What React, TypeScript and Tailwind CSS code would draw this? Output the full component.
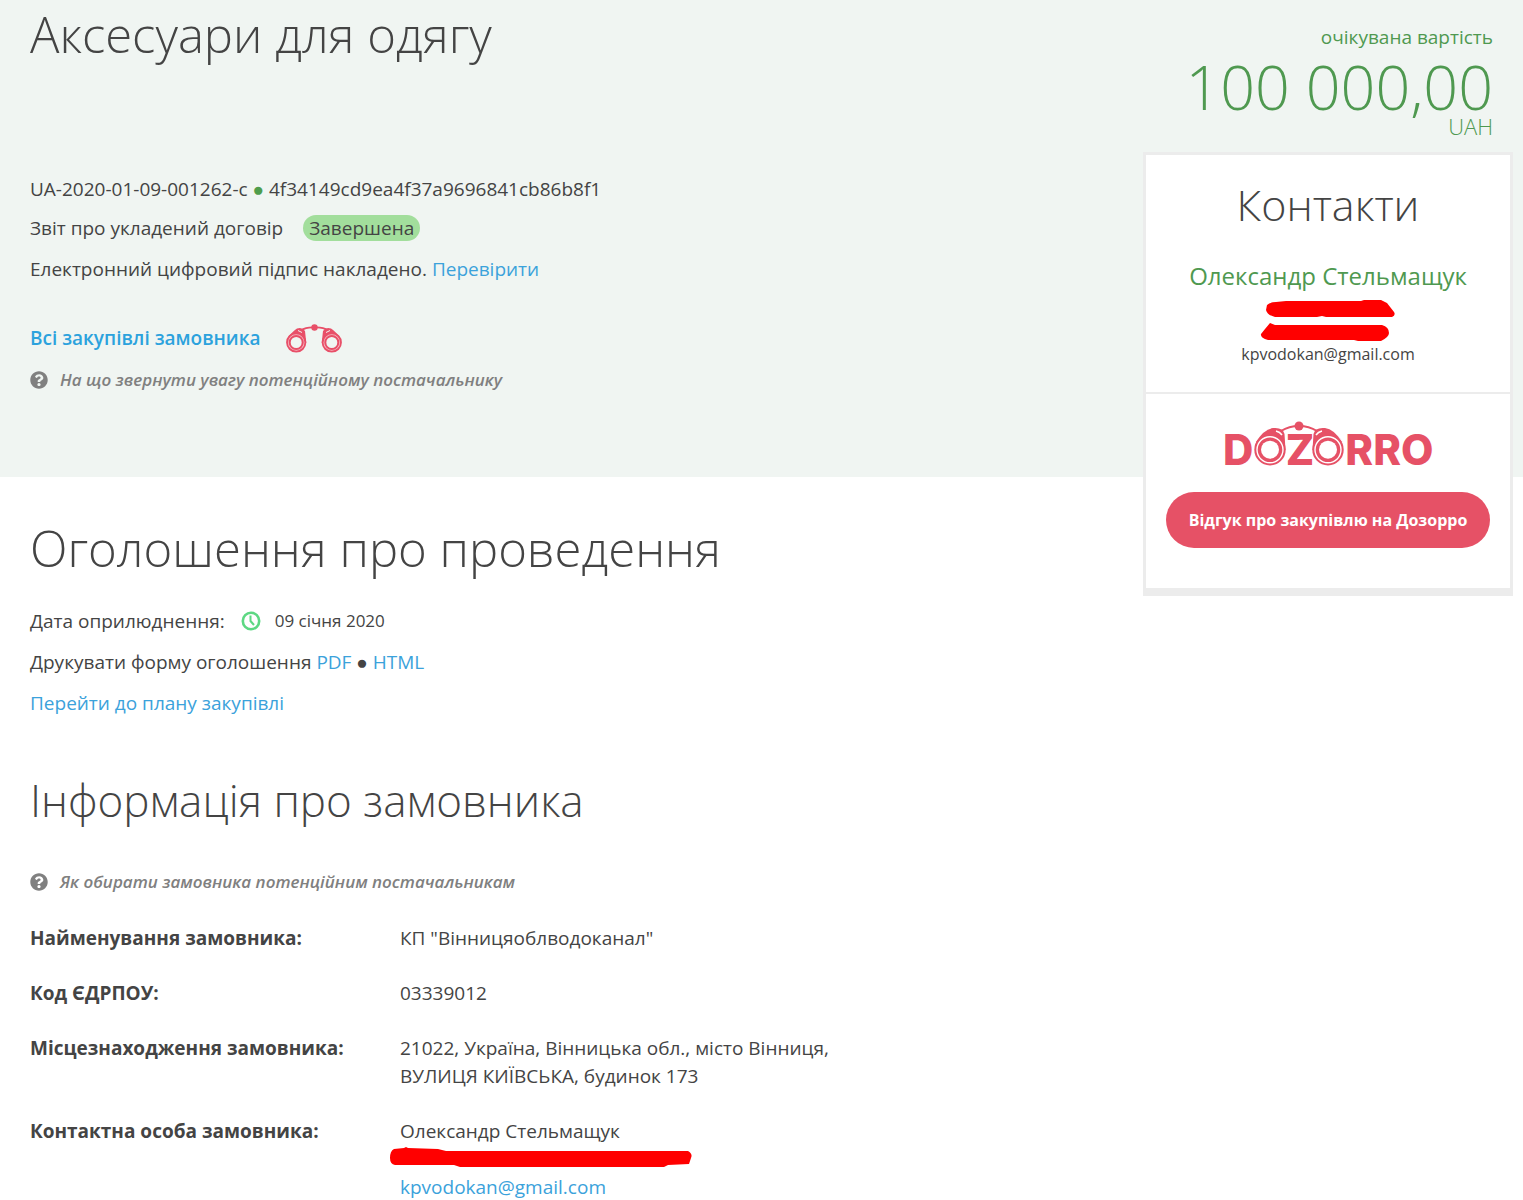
import React from 'react';
import { FaQuestionCircle } from 'react-icons/fa';

interface CustomerRow {
  label: string;
  value: React.ReactNode;
}

const Binoculars: React.FC = () => (
  <svg width="58" height="34" viewBox="0 0 58 34" fill="none" stroke="#e84f68" aria-hidden="true">
    <g transform="translate(0 2)">
      <path d="M16 7.500 Q21 4 29.500 4.500 Q38 4 43 7.500" strokeWidth="1.800" />
      <circle cx="29.500" cy="4.500" r="3.200" fill="#e84f68" stroke="none" />
      <path d="M3 14 Q8 8 12 5.500 Q17 3.500 20 8 L21.300 20 L11 12 Z" fill="#e84f68" stroke="none" />
      <path d="M55 14 Q50 8 46 5.500 Q41 3.500 38 8 L36.700 20 L47 12 Z" fill="#e84f68" stroke="none" />
      <path d="M13 7.500 L17 9.500 M45 7.500 L41 9.500" stroke="#f0f5f2" strokeWidth="1" />
      <circle cx="11.200" cy="19.500" r="9.200" fill="#f6b9c2" strokeWidth="1.800" />
      <circle cx="11.200" cy="19.500" r="6.500" fill="#f0f5f2" strokeWidth="2" />
      <circle cx="46.800" cy="19.500" r="9.200" fill="#f6b9c2" strokeWidth="1.800" />
      <circle cx="46.800" cy="19.500" r="6.500" fill="#f0f5f2" strokeWidth="2" />
    </g>
  </svg>
);

const DozorroLogo: React.FC = () => (
  <svg width="212" height="56" viewBox="0 0 212 56" fill="#e65166">
    <text x="1" y="44" fontSize="42" fontWeight="800" className="font-['Inter',sans-serif]">
      DOZORRO
    </text>
    <path d="M59 10 Q67 5 77 5 Q87 5 95 10" fill="none" stroke="#e65166" strokeWidth="2" />
    <circle cx="77" cy="5" r="4.500" />
    <circle cx="48" cy="28.700" r="16.800" fill="#fff" />
    <circle cx="106" cy="28.700" r="16.800" fill="#fff" />
    <path d="M34 21 Q42 8 51 7 Q61 6 62.500 13 L63.500 29 L48 29 Z" />
    <path d="M120 21 Q112 8 103 7 Q93 6 91.500 13 L90.500 29 L106 29 Z" />
    <path d="M54 10 Q58 11 60 14 M100 10 Q96 11 94 14" fill="none" stroke="#fff" strokeWidth="1.500" />
    <circle cx="48" cy="28.700" r="15.700" />
    <circle cx="48" cy="28.700" r="13" fill="none" stroke="#fff" strokeWidth="1.400" />
    <circle cx="48" cy="28.700" r="9" fill="#fff" />
    <circle cx="106" cy="28.700" r="15.700" />
    <circle cx="106" cy="28.700" r="13" fill="none" stroke="#fff" strokeWidth="1.400" />
    <circle cx="106" cy="28.700" r="9" fill="#fff" />
  </svg>
);

const HelpLink: React.FC<{ children: React.ReactNode }> = ({ children }) => (
  <a href="#" className="flex items-center gap-3 font-semibold italic text-[17px] leading-7 text-[#808080]">
    <FaQuestionCircle className="w-[18px] h-[18px]" />
    {children}
  </a>
);

const customerRows: CustomerRow[] = [
  { label: 'Найменування замовника:', value: 'КП "Вінницяоблводоканал"' },
  { label: 'Код ЄДРПОУ:', value: '03339012' },
  {
    label: 'Місцезнаходження замовника:',
    value: '21022, Україна, Вінницька обл., місто Вінниця, ВУЛИЦЯ КИЇВСЬКА, будинок 173',
  },
  {
    label: 'Контактна особа замовника:',
    value: (
      <>
        <div>Олександр Стельмащук</div>
        <svg className="block h-7 -ml-[10px]" width="302" height="28" viewBox="0 0 302 28" fill="#f00" aria-hidden="true">
          <path d="M4 4 L14 3 L16 2 L18 3 L48 4 L56 6 H298 Q303 9 301 13 L299 19 L278 20 L274 22 H70 L64 20 H5 Q0 19 0 13 Q0 6 4 4Z" />
        </svg>
        <a href="mailto:kpvodokan@gmail.com" className="text-[#3ba2db]">
          kpvodokan@gmail.com
        </a>
      </>
    ),
  },
];

export default function App() {
  return (
    <div className="bg-white font-['Open_Sans',sans-serif] text-[19px] leading-7 text-[#444]">
      {/* Header */}
      <header className="flex items-start justify-between bg-[#f0f5f2] pl-[30px] pr-[10px]">
        <div className="pb-20">
          <h1 className="pt-[2px] text-[49px] leading-[64px] font-light">Аксесуари для одягу</h1>
          <div className="mt-[109px]">
            UA-2020-01-09-001262-c <span className="text-[#4f9d4c]">●</span> 4f34149cd9ea4f37a9696841cb86b8f1
          </div>
          <div className="mt-[11px] flex items-center gap-5">
            Звіт про укладений договір
            <span className="rounded-full bg-[#a2de9c] px-[6px] leading-[26px]">Завершена</span>
          </div>
          <div className="mt-[13px]">
            Електронний цифровий підпис накладено.{' '}
            <a href="#" className="text-[#3ba2db]">
              Перевірити
            </a>
          </div>
          <div className="mt-[38px] flex items-center gap-6">
            <a href="#" className="font-semibold text-[#2ca2dd]">
              Всі закупівлі замовника
            </a>
            <Binoculars />
          </div>
          <div className="mt-[11px]">
            <HelpLink>На що звернути увагу потенційному постачальнику</HelpLink>
          </div>
        </div>

        {/* Price and contacts */}
        <aside className="-mb-[119px] w-[370px] shrink-0">
          <div className="px-5 pt-[23px] text-right text-[#4f9950]">
            <div>очікувана вартість</div>
            <div className="pt-[9px] text-[61px] leading-[54px] font-light">100 000,00</div>
            <div className="text-[22px] leading-6 font-light">UAH</div>
          </div>
          <div className="mt-[14px] border-[3px] border-b-8 border-[#ececec] bg-white text-center">
            <div className="border-b-2 border-[#ececec] pt-5 pb-[26px]">
              <h2 className="text-[43px] leading-[60px] font-light">Контакти</h2>
              <div className="mt-[27px] text-[24px] leading-7 text-[#4f9950]">Олександр Стельмащук</div>
              <svg className="mx-auto mt-[10px] block" width="136" height="42" viewBox="0 0 136 42" fill="#f00" aria-hidden="true">
                <path d="M7 5 Q10 2 16 2 L26 1 H101 L104 0 H121 L127 3 L134 12 Q136 15 132 17 H66 L62 16 L57 17 H15 Q7 15 6 10Z" />
                <path d="M10 23 L15 25 H122 Q129 27 129 33 Q129 37 121 41 H98 L94 40 H8 Q0 38 1 34 L5 29Z" />
              </svg>
              <div className="text-[16px] leading-6">kpvodokan@gmail.com</div>
            </div>
            <div className="px-5 pt-[27px] pb-10">
              <a href="#" className="flex justify-center">
                <DozorroLogo />
              </a>
              <button type="button" className="mt-[15px] h-14 w-full rounded-full bg-[#e65166] text-[16px] font-bold text-white">
                Відгук про закупівлю на Дозорро
              </button>
            </div>
          </div>
        </aside>
      </header>

      <main className="pl-[30px] pr-[400px]">
        {/* Announcement */}
        <section>
          <h2 className="pt-[39px] text-[49px] leading-[64px] font-light">Оголошення про проведення</h2>
          <div className="mt-[27px] flex items-center">
            Дата оприлюднення:
            <svg className="ml-4 mr-[14px]" width="20" height="20" viewBox="0 0 20 20" fill="none" stroke="#5dd883" strokeWidth="2.600" aria-hidden="true">
              <circle cx="10" cy="10" r="8.200" />
              <path d="M9.500 4.500 V10 L13 14" strokeWidth="2" />
            </svg>
            <span className="text-[17px]">09 січня 2020</span>
          </div>
          <div className="mt-[13px]">
            Друкувати форму оголошення{' '}
            <a href="#" className="text-[#3ba2db]">
              PDF
            </a>{' '}
            ●{' '}
            <a href="#" className="text-[#3ba2db]">
              HTML
            </a>
          </div>
          <div className="mt-[13px]">
            <a href="#" className="text-[#3ba2db]">
              Перейти до плану закупівлі
            </a>
          </div>
        </section>

        {/* Customer */}
        <section>
          <h2 className="mt-[53px] text-[44px] leading-[60px] font-light">Інформація про замовника</h2>
          <div className="mt-[38px]">
            <HelpLink>Як обирати замовника потенційним постачальникам</HelpLink>
          </div>
          <table className="mt-7 w-full max-w-[820px]">
            <tbody>
              {customerRows.map(row => (
                <tr key={row.label} className="align-top">
                  <th scope="row" className="w-[370px] pb-[27px] text-left font-bold">
                    {row.label}
                  </th>
                  <td className="pb-[27px]">{row.value}</td>
                </tr>
              ))}
            </tbody>
          </table>
        </section>
      </main>
    </div>
  );
}
